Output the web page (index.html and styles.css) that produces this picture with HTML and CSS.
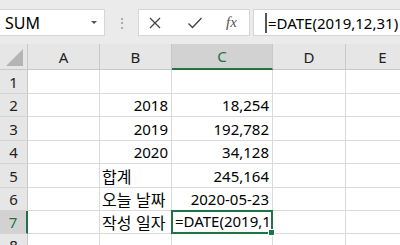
FILE: index.html
```html
<!DOCTYPE html>
<html lang="ko">
<head>
    <meta charset="UTF-8">
    <title>SUM</title>
    <link rel="stylesheet" href="styles.css">
</head>
<body>
    <div class="formula-bar">
        <div class="name-box">
            <span class="name">SUM</span>
            <span class="caret"></span>
        </div>
        <div class="grip">⋮</div>
        <div class="func-box">
            <svg class="icon cancel" width="14" height="14" viewBox="0 0 14 14"><path d="M2 2 L12 12 M12 2 L2 12" stroke="#444" stroke-width="1.3" fill="none"/></svg>
            <svg class="icon enter" width="16" height="14" viewBox="0 0 16 14"><path d="M1.5 7.5 L5.5 11.5 L14.5 2" stroke="#444" stroke-width="1.4" fill="none"/></svg>
            <span class="fx">fx</span>
        </div>
        <div class="formula-input"><span class="cursor"></span>=DATE(2019,12,31)</div>
    </div>

    <div class="sheet">
        <div class="corner"><span class="triangle"></span></div>
        <div class="col-head">A</div>
        <div class="col-head">B</div>
        <div class="col-head active">C</div>
        <div class="col-head">D</div>
        <div class="col-head">E</div>

        <div class="row-head">1</div>
        <div class="cell"></div><div class="cell"></div><div class="cell"></div><div class="cell"></div><div class="cell"></div>

        <div class="row-head">2</div>
        <div class="cell"></div><div class="cell num">2018</div><div class="cell num">18,254</div><div class="cell"></div><div class="cell"></div>

        <div class="row-head">3</div>
        <div class="cell"></div><div class="cell num">2019</div><div class="cell num">192,782</div><div class="cell"></div><div class="cell"></div>

        <div class="row-head">4</div>
        <div class="cell"></div><div class="cell num">2020</div><div class="cell num">34,128</div><div class="cell"></div><div class="cell"></div>

        <div class="row-head">5</div>
        <div class="cell"></div><div class="cell label">합계</div><div class="cell num">245,164</div><div class="cell"></div><div class="cell"></div>

        <div class="row-head">6</div>
        <div class="cell"></div><div class="cell label">오늘 날짜</div><div class="cell num">2020-05-23</div><div class="cell"></div><div class="cell"></div>

        <div class="row-head active">7</div>
        <div class="cell"></div><div class="cell label">작성 일자</div><div class="cell editing">=DATE(2019,1<span class="handle"></span></div><div class="cell"></div><div class="cell"></div>

        <div class="row-head">8</div>
        <div class="cell"></div><div class="cell"></div><div class="cell"></div><div class="cell"></div><div class="cell"></div>
    </div>
</body>
</html>
```

FILE: styles.css
```css
/* Global */
body {
    margin: 0;
    width: 400px;
    height: 245px;
    overflow: hidden;
    background: #ffffff;
    font-family: "Noto Sans", "Noto Sans CJK KR", sans-serif;
    color: #000;
}

/* Formula bar */
.formula-bar {
    display: flex;
    align-items: flex-start;
    height: 44px;
    padding-top: 9px;
    box-sizing: border-box;
    background-color: #ebebeb;
}

.name-box {
    display: flex;
    align-items: center;
    justify-content: space-between;
    width: 105px;
    height: 27px;
    box-sizing: border-box;
    padding: 0 7px 0 5px;
    background: #fff;
    border: 1px solid #d6d6d6;
    border-left: none;
    font-size: 16px;
}

.caret {
    width: 0;
    height: 0;
    border-left: 3px solid transparent;
    border-right: 3px solid transparent;
    border-top: 3px solid #555;
}

.grip {
    width: 33px;
    text-align: center;
    line-height: 27px;
    color: #9a9a9a;
    font-size: 14px;
}

.func-box {
    display: flex;
    align-items: center;
    width: 112px;
    height: 27px;
    box-sizing: border-box;
    padding-left: 9px;
    background: #fff;
    border: 1px solid #d6d6d6;
}

.enter {
    margin-left: 25px;
}

.fx {
    margin-left: 23px;
    font-family: "Liberation Serif", serif;
    font-style: italic;
    font-size: 15px;
    color: #555;
}

.formula-input {
    display: flex;
    align-items: center;
    flex: 1;
    height: 27px;
    margin-left: 3px;
    box-sizing: border-box;
    padding-left: 11px;
    background: #fff;
    border: 1px solid #d6d6d6;
    border-right: none;
    font-size: 15px;
    white-space: nowrap;
}

.cursor {
    width: 2px;
    height: 20px;
    margin-right: 1px;
    background: #555;
}

/* Sheet grid */
.sheet {
    display: grid;
    grid-template-columns: 28px 72px 72px 101px 73px 74px;
    grid-template-rows: 26px 24px 23px 24px 23px 24px 23px 23px 23px;
    font-size: 15px;
}

.corner {
    position: relative;
    background: #e6e6e6;
    border-right: 1px solid #c8c8c8;
    border-bottom: 1px solid #c8c8c8;
}

.triangle {
    position: absolute;
    right: 4px;
    bottom: 3px;
    width: 0;
    height: 0;
    border-left: 17px solid transparent;
    border-bottom: 17px solid #b4b4b4;
}

.col-head {
    display: flex;
    align-items: center;
    justify-content: center;
    background: #e6e6e6;
    border-right: 1px solid #c8c8c8;
    border-bottom: 1px solid #c8c8c8;
    color: #222;
}

.col-head.active {
    background: #d2d2d2;
    color: #217346;
    border-bottom: 2px solid #217346;
}

.row-head {
    display: flex;
    align-items: center;
    justify-content: center;
    background: #e6e6e6;
    border-right: 1px solid #c8c8c8;
    border-bottom: 1px solid #d4d4d4;
    color: #222;
}

.row-head.active {
    background: #d2d2d2;
    color: #217346;
    border-right: 2px solid #217346;
}

.cell {
    display: flex;
    align-items: flex-end;
    padding: 0 3px 1px;
    border-right: 1px solid #dadada;
    border-bottom: 1px solid #dadada;
    white-space: nowrap;
    overflow: hidden;
    line-height: 20px;
}

.num {
    justify-content: flex-end;
}

.label {
    justify-content: flex-start;
    padding-left: 2px;
    font-family: "Noto Sans CJK KR", sans-serif;
    font-size: 16px;
}

.editing {
    position: relative;
    overflow: visible;
    margin: -1px 0 0 -1px;
    border: 2px solid #217346;
    padding-left: 2px;
}

.handle {
    position: absolute;
    right: -4px;
    bottom: -4px;
    width: 5px;
    height: 5px;
    background: #217346;
    border: 1px solid #fff;
}
```
